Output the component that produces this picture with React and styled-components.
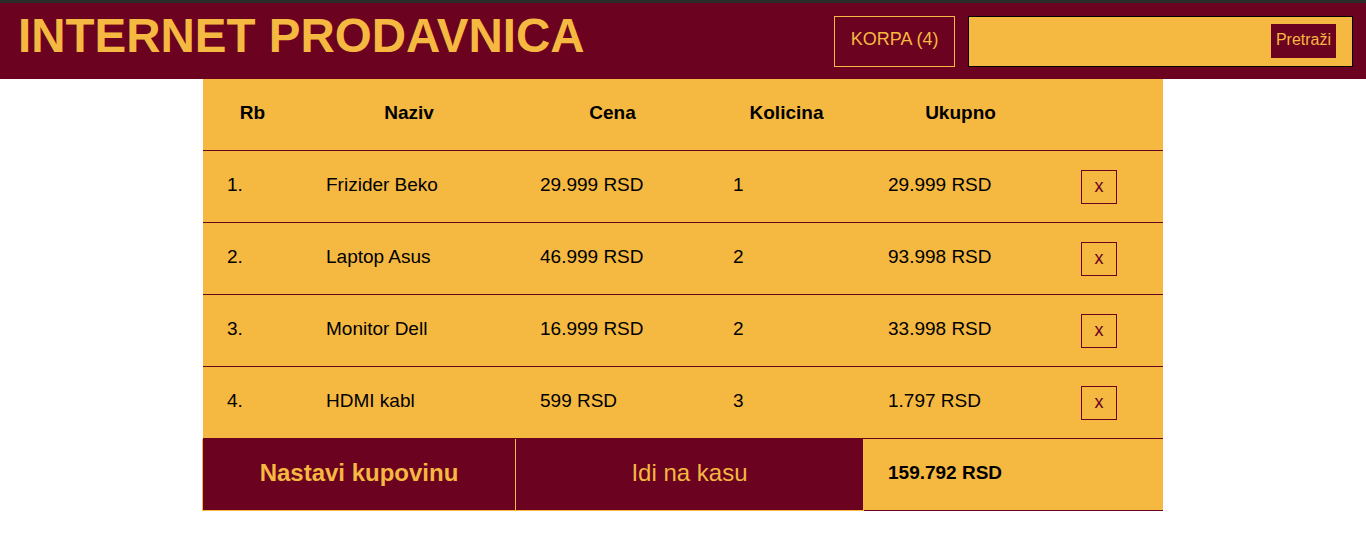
import React from "react";
import styled, { createGlobalStyle } from "styled-components";

const BURGUNDY = "#6a0220";
const YELLOW = "#f5b841";

const GlobalStyle = createGlobalStyle`
  body {
    margin: 0;
    background: #fff;
    font-family: "Liberation Sans", Arial, sans-serif;
  }
`;

const Header = styled.header`
  display: flex;
  align-items: center;
  height: 76px;
  background: ${BURGUNDY};
  border-top: 3px solid #2b2b2b;
  padding: 0 13px 0 18px;
`;

const Title = styled.h1`
  flex: 1;
  margin: 0 0 12px;
  color: ${YELLOW};
  font-size: 47.5px;
  font-weight: bold;
`;

const CartButton = styled.button`
  height: 51px;
  padding: 0 15.5px 4px;
  margin-right: 13px;
  background: transparent;
  border: 1px solid ${YELLOW};
  color: ${YELLOW};
  font-family: inherit;
  font-size: 18px;
`;

const SearchBox = styled.form`
  display: flex;
  align-items: center;
  justify-content: flex-end;
  width: 385px;
  height: 51px;
  box-sizing: border-box;
  padding-right: 16px;
  background: ${YELLOW};
  border: 1px solid #000;
`;

const SearchButton = styled.button`
  height: 34px;
  padding: 0 5px 3px;
  background: ${BURGUNDY};
  border: none;
  color: ${YELLOW};
  font-family: inherit;
  font-size: 16px;
`;

const Cart = styled.div`
  width: 960px;
  margin: 0 auto;
  display: grid;
  grid-template-columns: 99px 214px 193px 155px 193px 106px;
  background: ${YELLOW};
  color: #000;
`;

const HeadCell = styled.div`
  display: flex;
  align-items: center;
  justify-content: center;
  box-sizing: border-box;
  height: 72px;
  padding-bottom: 4px;
  border-bottom: 1px solid ${BURGUNDY};
  font-size: 19px;
  font-weight: bold;
`;

const Cell = styled.div`
  display: flex;
  align-items: center;
  box-sizing: border-box;
  height: 72px;
  padding: 0 0 4px 24px;
  border-bottom: 1px solid ${BURGUNDY};
  font-size: 19px;
`;

const RemoveButton = styled.button`
  width: 36px;
  height: 34px;
  margin-top: 4px;
  padding: 0;
  background: transparent;
  border: 1px solid ${BURGUNDY};
  color: ${BURGUNDY};
  font-family: inherit;
  font-size: 18px;
`;

const ActionCell = styled.button`
  grid-column: span 2;
  height: 72px;
  padding: 0 0 4px;
  margin-left: ${(p) => (p.$first ? "-1px" : "0")};
  background: ${BURGUNDY};
  border: 1px solid ${YELLOW};
  border-top: none;
  border-left: ${(p) => (p.$first ? `1px solid ${YELLOW}` : "none")};
  color: ${YELLOW};
  font-family: inherit;
  font-size: 24px;
  font-weight: ${(p) => (p.$bold ? "bold" : "normal")};
`;

const TotalCell = styled(Cell)`
  grid-column: span 2;
  font-weight: bold;
`;

const items = [
  { name: "Frizider Beko", price: "29.999 RSD", qty: 1, total: "29.999 RSD" },
  { name: "Laptop Asus", price: "46.999 RSD", qty: 2, total: "93.998 RSD" },
  { name: "Monitor Dell", price: "16.999 RSD", qty: 2, total: "33.998 RSD" },
  { name: "HDMI kabl", price: "599 RSD", qty: 3, total: "1.797 RSD" },
];

export default function App() {
  return (
    <>
      <GlobalStyle />
      <Header>
        <Title>INTERNET PRODAVNICA</Title>
        <CartButton>KORPA (4)</CartButton>
        <SearchBox onSubmit={(e) => e.preventDefault()}>
          <SearchButton>Pretraži</SearchButton>
        </SearchBox>
      </Header>
      <Cart>
        <HeadCell>Rb</HeadCell>
        <HeadCell>Naziv</HeadCell>
        <HeadCell>Cena</HeadCell>
        <HeadCell>Kolicina</HeadCell>
        <HeadCell>Ukupno</HeadCell>
        <HeadCell />
        {items.map((item, i) => (
          <React.Fragment key={item.name}>
            <Cell>{i + 1}.</Cell>
            <Cell>{item.name}</Cell>
            <Cell>{item.price}</Cell>
            <Cell>{item.qty}</Cell>
            <Cell>{item.total}</Cell>
            <Cell>
              <RemoveButton>x</RemoveButton>
            </Cell>
          </React.Fragment>
        ))}
        <ActionCell $first $bold>
          Nastavi kupovinu
        </ActionCell>
        <ActionCell>Idi na kasu</ActionCell>
        <TotalCell>159.792 RSD</TotalCell>
      </Cart>
    </>
  );
}
